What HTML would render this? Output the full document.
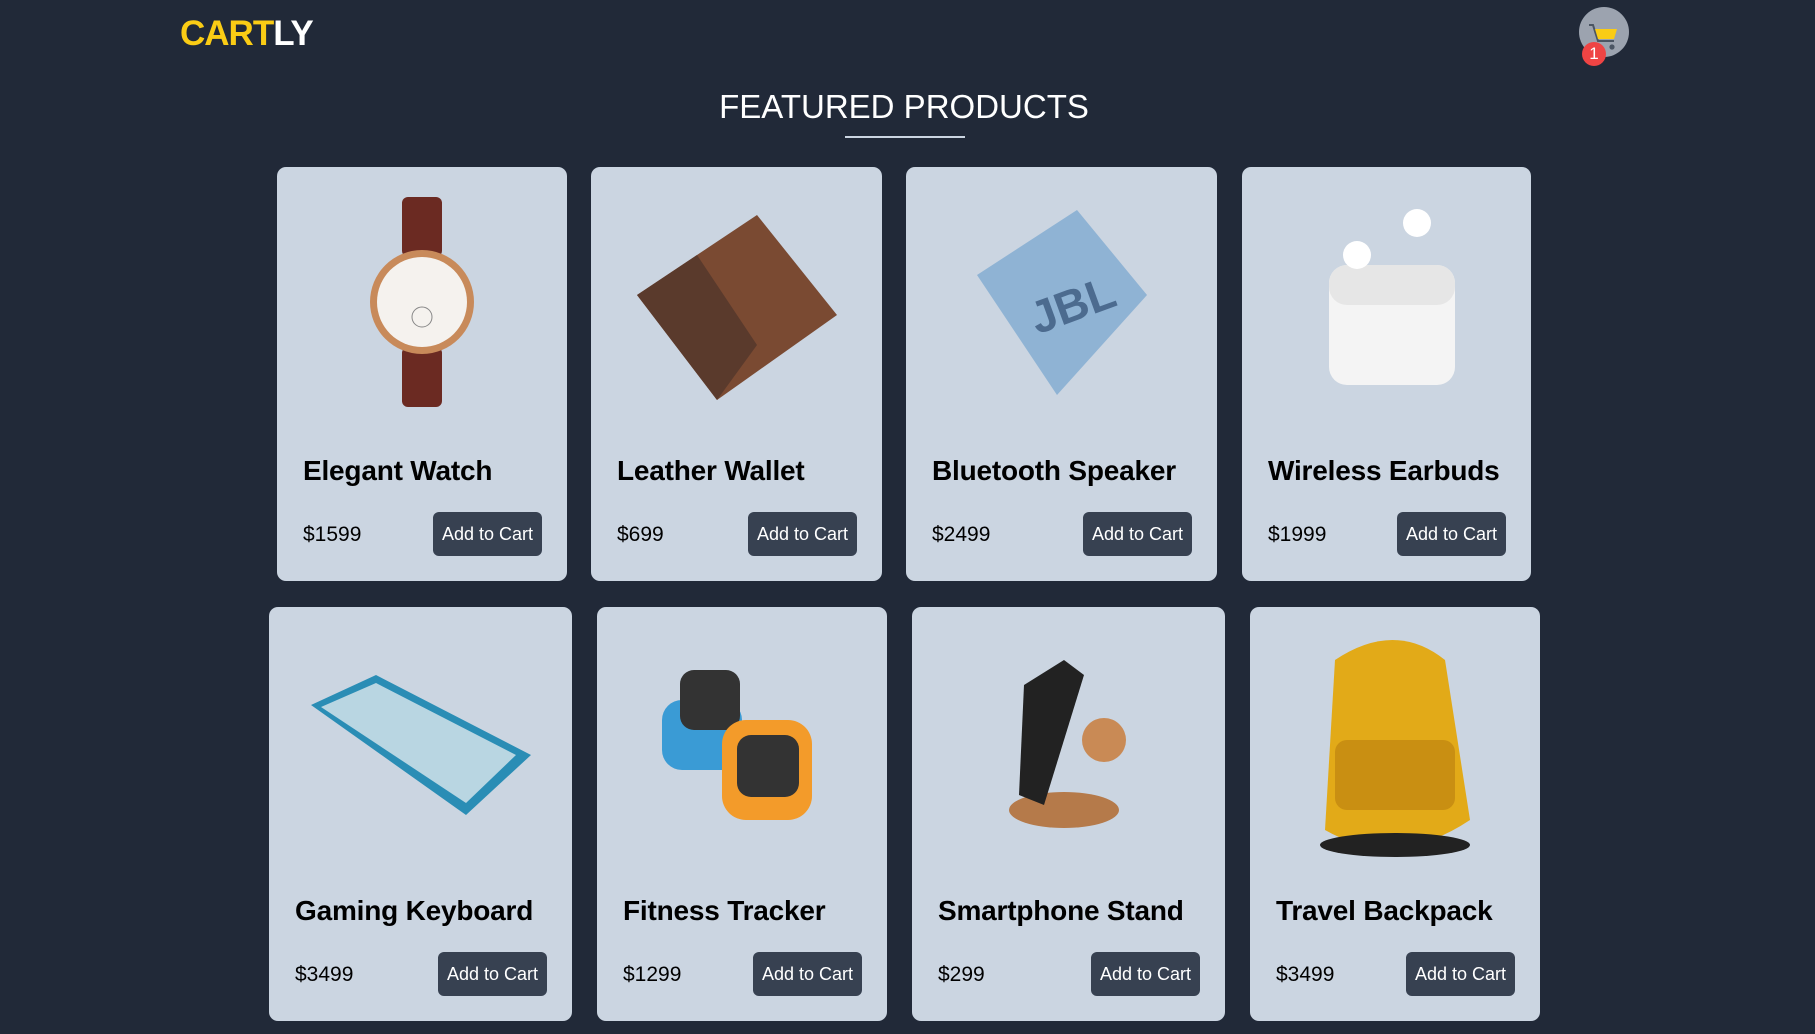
<!DOCTYPE html>
<html><head><meta charset="utf-8"><style>
*{margin:0;padding:0;box-sizing:border-box}
body{width:1815px;height:1034px;background:#212938;font-family:"Liberation Sans",sans-serif;position:relative;overflow:hidden}
.logo{position:absolute;left:180px;top:14px;font-size:35px;font-weight:bold;color:#facc15;letter-spacing:-1px}
.logo span{color:#fff}
.cartbtn{position:absolute;left:1579px;top:7px;width:50px;height:50px;border-radius:50%;background:#9ca3af}
.badge{position:absolute;left:1582px;top:42px;width:24px;height:24px;border-radius:50%;background:#ef4444;color:#fff;font-size:17px;text-align:center;line-height:24px}
h1{position:absolute;left:0;width:1808px;top:88px;text-align:center;color:#fff;font-weight:normal;font-size:33px}
.ul{position:absolute;left:845px;top:136px;width:120px;height:2px;background:#cbd5e1}
.card{position:absolute;background:#cbd5e1;border-radius:9px;height:414px}
.card .img{position:absolute;left:0;right:0;top:30px;height:215px;display:flex;align-items:center;justify-content:center}
.card h2{position:absolute;left:26px;top:288px;font-size:28px;font-weight:bold;color:#000;white-space:nowrap;letter-spacing:-0.2px}
.card .price{position:absolute;left:26px;top:356px;font-size:21px;color:#000}
.card .btn{position:absolute;right:25px;top:345px;width:109px;height:44px;border-radius:6px;background:#374151;color:#fff;font-size:18px;text-align:center;line-height:44px}
</style></head><body>
<div class="logo">CART<span>LY</span></div>
<div class="cartbtn"><svg width="50" height="50" viewBox="0 0 50 50"><path d="M10 18h4l5 16h16" stroke="#4b5563" stroke-width="2" fill="none"/><path d="M16 22h22l-3 10H19z" fill="#facc15"/><circle cx="21" cy="40" r="2.6" fill="#4b5563"/><circle cx="33" cy="40" r="2.6" fill="#4b5563"/></svg></div>
<div class="badge">1</div>
<h1>FEATURED PRODUCTS</h1>
<div class="ul"></div>

<div class="card" style="left:277px;top:167px;width:290px">
<div class="img"><svg width="120" height="215" viewBox="0 0 120 215"><rect x="40" y="0" width="40" height="60" rx="6" fill="#6b2a22"/><rect x="40" y="150" width="40" height="60" rx="6" fill="#6b2a22"/><circle cx="60" cy="105" r="52" fill="#c88a5a"/><circle cx="60" cy="105" r="45" fill="#f5f2ee"/><circle cx="60" cy="120" r="10" fill="none" stroke="#888"/></svg></div>
<h2>Elegant Watch</h2><div class="price">$1599</div><div class="btn">Add to Cart</div></div>

<div class="card" style="left:591px;top:167px;width:291px">
<div class="img"><svg width="220" height="200" viewBox="0 0 220 200"><path d="M10 90 L130 10 L210 110 L90 195 Z" fill="#7a4a32"/><path d="M10 90 L70 50 L130 140 L90 195 Z" fill="#5a3a2c"/></svg></div>
<h2>Leather Wallet</h2><div class="price">$699</div><div class="btn">Add to Cart</div></div>

<div class="card" style="left:906px;top:167px;width:311px">
<div class="img"><svg width="190" height="200" viewBox="0 0 190 200"><path d="M10 70 L110 5 L180 90 L90 190 Z" fill="#8fb3d4"/><text x="65" y="120" font-size="46" font-weight="bold" fill="#4c6b8f" font-family="Liberation Sans" transform="rotate(-20 95 110)">JBL</text></svg></div>
<h2>Bluetooth Speaker</h2><div class="price">$2499</div><div class="btn">Add to Cart</div></div>

<div class="card" style="left:1242px;top:167px;width:289px">
<div class="img"><svg width="140" height="200" viewBox="0 0 140 200"><rect x="12" y="60" width="126" height="120" rx="18" fill="#f4f4f4"/><rect x="12" y="60" width="126" height="40" rx="18" fill="#e6e6e6"/><circle cx="40" cy="50" r="14" fill="#fff"/><circle cx="100" cy="18" r="14" fill="#fff"/></svg></div>
<h2>Wireless Earbuds</h2><div class="price">$1999</div><div class="btn">Add to Cart</div></div>

<div class="card" style="left:269px;top:607px;width:303px">
<div class="img"><svg width="230" height="160" viewBox="0 0 230 160"><path d="M5 40 L70 10 L225 90 L160 150 Z" fill="#2a8db5"/><path d="M15 42 L70 18 L210 90 L160 138 Z" fill="#b9d6e2"/></svg></div>
<h2>Gaming Keyboard</h2><div class="price">$3499</div><div class="btn">Add to Cart</div></div>

<div class="card" style="left:597px;top:607px;width:290px">
<div class="img"><svg width="160" height="170" viewBox="0 0 160 170"><rect x="0" y="40" width="80" height="70" rx="20" fill="#3a9bd5"/><rect x="18" y="10" width="60" height="60" rx="14" fill="#333"/><rect x="60" y="60" width="90" height="100" rx="24" fill="#f39b2a"/><rect x="75" y="75" width="62" height="62" rx="14" fill="#333"/></svg></div>
<h2>Fitness Tracker</h2><div class="price">$1299</div><div class="btn">Add to Cart</div></div>

<div class="card" style="left:912px;top:607px;width:313px">
<div class="img"><svg width="130" height="180" viewBox="0 0 130 180"><ellipse cx="60" cy="155" rx="55" ry="18" fill="#b57a4a"/><path d="M20 30 L60 5 L80 20 L40 150 L15 140 Z" fill="#222"/><circle cx="100" cy="85" r="22" fill="#c98a55"/></svg></div>
<h2>Smartphone Stand</h2><div class="price">$299</div><div class="btn">Add to Cart</div></div>

<div class="card" style="left:1250px;top:607px;width:290px">
<div class="img"><svg width="200" height="230" viewBox="0 0 200 230"><path d="M40 30 Q100 -10 150 30 L175 190 Q100 240 30 200 Z" fill="#e2aa18"/><rect x="40" y="110" width="120" height="70" rx="12" fill="#c98f12"/><ellipse cx="100" cy="215" rx="75" ry="12" fill="#222"/></svg></div>
<h2>Travel Backpack</h2><div class="price">$3499</div><div class="btn">Add to Cart</div></div>
</body></html>
